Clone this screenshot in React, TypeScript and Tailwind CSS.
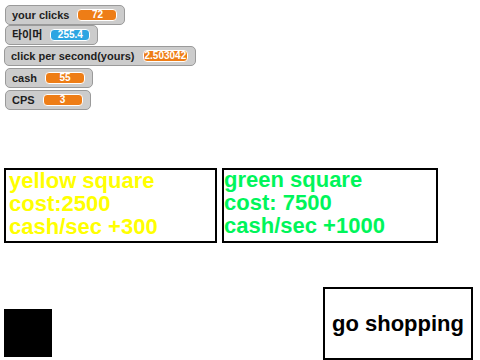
type MonitorProps = {
  label: string
  value: string
  color: string
  className?: string
}

function Monitor({ label, value, color, className }: MonitorProps) {
  return (
    <div
      className={
        "flex items-center h-[20px] pl-[6px] pr-[7px] rounded-[5px] border border-[#9a9a9a] bg-[#cccccc] " +
        (className ?? "")
      }
    >
      <span className="text-[11px] font-bold text-[#1e1e1e] leading-none whitespace-nowrap">{label}</span>
      <span
        className={
          "ml-[8px] min-w-[40px] h-[12px] px-[1px] rounded-[4px] border border-white flex items-center justify-center text-[10px] font-bold text-white leading-none " +
          color
        }
      >
        {value}
      </span>
    </div>
  )
}

export default function App() {
  return (
    <div
      className="w-[480px] h-[360px] bg-white overflow-hidden flex flex-col"
      style={{ fontFamily: '"Liberation Sans", Arial, "Noto Sans CJK KR", sans-serif' }}
    >
      {/* monitors */}
      <div className="flex flex-col items-start pt-[5px] pl-[5px]">
        <Monitor label="your clicks" value="72" color="bg-[#ee7d16]" />
        <Monitor label="타이머" value="255.4" color="bg-[#2ca5e2]" />
        <Monitor label="click per second(yours)" value="2.503042" color="bg-[#ee7d16]" className="mt-[1px] -ml-[1px]" />
        <Monitor label="cash" value="55" color="bg-[#ee7d16]" className="mt-[2px] h-[19px]" />
        <Monitor label="CPS" value="3" color="bg-[#ee7d16]" className="mt-[2px]" />
      </div>

      {/* shop items */}
      <div className="flex items-start mt-[58px] pl-[4px]">
        <div className="w-[213px] h-[75px] border-2 border-black pl-[3px] text-[22px] font-bold leading-[23px] text-[#ffff00] whitespace-nowrap">
          <div className="-mt-[1px]">yellow square</div>
          <div>cost:2500</div>
          <div>cash/sec +300</div>
        </div>
        <div className="w-[216px] h-[75px] border-2 border-black ml-[5px] text-[22px] font-bold leading-[23px] text-[#00f55a] whitespace-nowrap">
          <div className="-mt-[2px]">green square</div>
          <div>cost: 7500</div>
          <div>cash/sec +1000</div>
        </div>
      </div>

      {/* bottom */}
      <div className="flex items-start mt-[44px] pl-[4px]">
        <div className="w-[48px] h-[48px] bg-black mt-[22px]" />
        <div className="ml-[271px] w-[150px] h-[73px] border-2 border-black flex items-center justify-center text-[22px] font-bold text-black">
          go shopping
        </div>
      </div>
    </div>
  )
}
